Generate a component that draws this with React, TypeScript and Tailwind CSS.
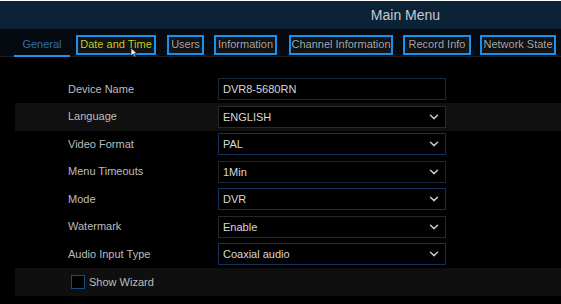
import React from "react";

const rows: { label: string; value: string; select: boolean; alt?: boolean; border: string }[] = [
  { label: "Device Name", value: "DVR8-5680RN", select: false, border: "border-[#16293d]" },
  { label: "Language", value: "ENGLISH", select: true, alt: true, border: "border-[#262a2e]" },
  { label: "Video Format", value: "PAL", select: true, border: "border-[#11305a]" },
  { label: "Menu Timeouts", value: "1Min", select: true, border: "border-[#1a2530]" },
  { label: "Mode", value: "DVR", select: true, border: "border-[#12325c]" },
  { label: "Watermark", value: "Enable", select: true, border: "border-[#22282e]" },
  { label: "Audio Input Type", value: "Coaxial audio", select: true, border: "border-[#12305a]" },
];

function Chevron() {
  return (
    <svg width="10" height="6" viewBox="0 0 10 6" className="shrink-0">
      <path d="M1.5 1.2 L5 4.6 L8.5 1.2" fill="none" stroke="#c4c4c4" strokeWidth="1.5" strokeLinecap="round" strokeLinejoin="round" />
    </svg>
  );
}

function TabBox({ label, w, ml, yellow }: { label: string; w: string; ml: string; yellow?: boolean }) {
  return (
    <div
      className={`${w} ${ml} h-[20px] border-2 border-[#1592ee] bg-[#121416] flex items-center justify-center text-[11px] leading-none whitespace-nowrap ${
        yellow ? "text-[#c9d12a]" : "text-[#a9abad]"
      } [text-shadow:0_0_1px_#000,0_0_1px_#000]`}
    >
      {label}
    </div>
  );
}

export default function App() {
  return (
    <div className="w-[561px] h-[304px] bg-black overflow-hidden relative" style={{ fontFamily: '"Liberation Sans", Arial, sans-serif' }}>
      <div className="h-[1px] bg-white" />
      <div className="h-[28px] bg-[#0b2237] flex items-center justify-center pl-[250px]">
        <span className="text-[14px] text-[#c3cbd3]">Main Menu</span>
      </div>
      <div className="h-[28px] bg-[#050a10] border-b border-[#1a1f26] flex items-center pl-[14px] relative">
        <div className="w-[56px] h-full flex items-center justify-center relative pt-[3px]">
          <span className="text-[11px] text-[#2e6fae]">General</span>
          <div className="absolute left-0 right-0 bottom-[-1px] h-[2px] bg-[#2b8ee6]" />
        </div>
        <div className="flex items-center pt-[4px]">
          <TabBox label="Date and Time" w="w-[80px]" ml="ml-[6px]" yellow />
          <TabBox label="Users" w="w-[37px]" ml="ml-[11px]" />
          <TabBox label="Information" w="w-[63px]" ml="ml-[10px]" />
          <TabBox label="Channel Information" w="w-[104px]" ml="ml-[12px]" />
          <TabBox label="Record Info" w="w-[68px]" ml="ml-[10px]" />
          <TabBox label="Network State" w="w-[76px]" ml="ml-[9px]" />
        </div>
        <svg className="absolute left-[130px] top-[18px]" width="8" height="11" viewBox="0 0 8 11">
          <path d="M1 1 L1 9 L3 7 L4.5 10 L5.7 9.4 L4.3 6.5 L7 6.5 Z" fill="#f2f2f2" stroke="#222" strokeWidth="0.7" />
        </svg>
      </div>
      <div className="pt-[18.5px]">
        {rows.map((r) => (
          <div
            key={r.label}
            className={`h-[27.5px] ml-[15px] flex items-center ${r.alt ? "bg-[#101010]" : ""}`}
          >
            <div className="w-[203px] pl-[53px] text-[11px] text-[#bdbdbd] -mt-[1px]">{r.label}</div>
            <div
              className={`w-[228px] h-[22px] border ${r.border} bg-black flex items-center justify-between pl-[4px] pr-[6px] text-[11px] text-[#d8d8d8]`}
            >
              <span>{r.value}</span>
              {r.select && <Chevron />}
            </div>
          </div>
        ))}
        <div className="h-[27.5px] ml-[15px] bg-[#0f0f0f] flex items-center">
          <div className="ml-[56px] w-[14px] h-[14px] border border-[#1b4a80] bg-black" />
          <span className="ml-[4px] text-[11px] text-[#bdbdbd]">Show Wizard</span>
        </div>
      </div>
    </div>
  );
}
